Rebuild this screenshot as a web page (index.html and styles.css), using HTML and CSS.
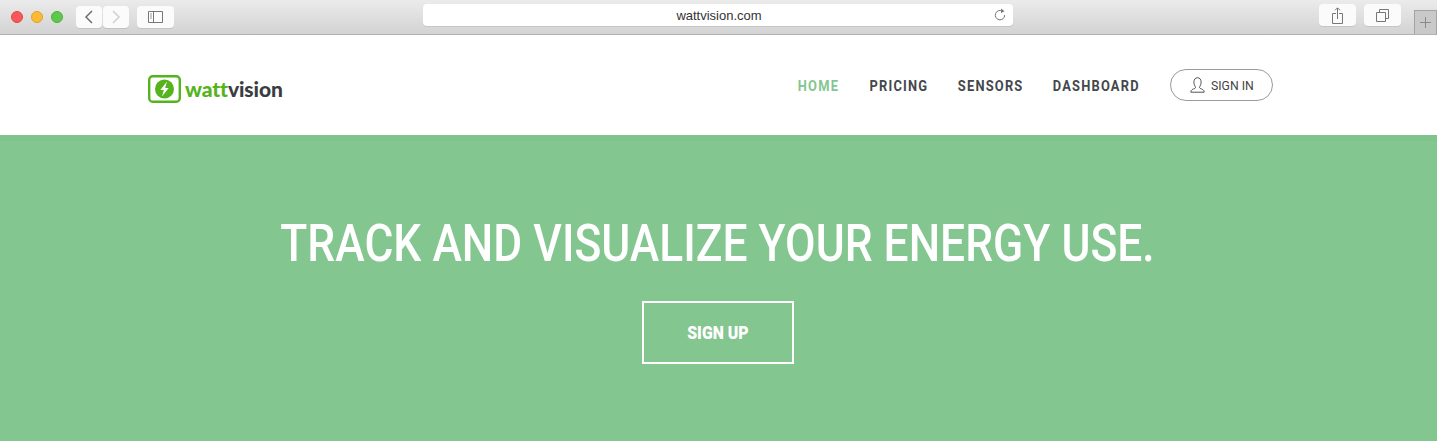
FILE: index.html
```html
<!DOCTYPE html>
<html lang="en">
<head>
  <meta charset="UTF-8">
  <meta name="viewport" content="width=device-width, initial-scale=1.0">
  <title>wattvision</title>
  <link rel="stylesheet" href="styles.css">
</head>
<body>

  <div class="toolbar">
    <div class="toolbarLeft">
      <span class="light lightRed"></span>
      <span class="light lightYellow"></span>
      <span class="light lightGreen"></span>
      <div class="navBtns">
        <span class="toolBtn backBtn">
          <svg width="10" height="16" viewBox="0 0 10 16"><path d="M8 2 2 8l6 6" fill="none" stroke="#6e6e6e" stroke-width="1.500"/></svg>
        </span>
        <span class="toolBtn backBtn">
          <svg width="10" height="16" viewBox="0 0 10 16"><path d="M2 2l6 6-6 6" fill="none" stroke="#d0d0d0" stroke-width="1.500"/></svg>
        </span>
      </div>
      <span class="toolBtn sidebarBtn">
        <svg width="16" height="12" viewBox="0 0 16 12"><path d="M.5.5h14v11H.5zM5.500.5v11" fill="none" stroke="#777"/><path d="M2 3h2M2 5h2M2 7h2" stroke="#999"/></svg>
      </span>
    </div>
    <div class="addressBar">
      <span class="addressText">wattvision.com</span>
      <svg class="reloadIcon" width="12" height="13" viewBox="0 0 12 13"><path d="M8.600 3.200A4.700 4.700 0 1 0 10.700 7" fill="none" stroke="#777"/><path d="M7 .5l3.500 2.700L7 5z" fill="#777"/></svg>
    </div>
    <div class="toolbarRight">
      <span class="toolBtn shareBtn">
        <svg width="12" height="17" viewBox="0 0 12 17"><path d="M4 6.500H.5v10h10v-10H7M5.500 12V1M3 3.300 5.500 .8 8 3.300" fill="none" stroke="#777"/></svg>
      </span>
      <span class="toolBtn shareBtn">
        <svg width="13" height="13" viewBox="0 0 13 13"><path d="M.5 3.500h9v9h-9zM3.500 3.500v-3h9v9h-3" fill="none" stroke="#777"/></svg>
      </span>
      <span class="newTab">
        <svg width="11" height="11" viewBox="0 0 11 11"><path d="M5.500 0v11M0 5.500h11" stroke="#8a8a8a"/></svg>
      </span>
    </div>
  </div>

  <header class="siteHeader">
    <a class="logo" href="#">
      <svg width="33" height="28" viewBox="0 0 33 28">
        <rect x="1.200" y="1.200" width="30.600" height="25.600" rx="3.500" fill="none" stroke="#55b31d" stroke-width="2.400"/>
        <circle cx="16.500" cy="14" r="9.500" fill="#55b31d"/>
        <path d="M19 6.500 12.300 15h3.500l-1.800 6.500 6.700-8.500h-3.500z" fill="#fff"/>
      </svg>
      <span class="logoText"><span class="logoWatt">watt</span>vision</span>
    </a>
    <nav class="mainNav">
      <a class="navLink navHome navActive" href="#"><span class="navText">HOME</span></a>
      <a class="navLink navPricing" href="#"><span class="navText">PRICING</span></a>
      <a class="navLink navSensors" href="#"><span class="navText">SENSORS</span></a>
      <a class="navLink navDashboard" href="#"><span class="navText">DASHBOARD</span></a>
      <a class="signIn" href="#">
        <svg width="15" height="16" viewBox="0 0 15 16"><path d="M.8 15.200c0-2.700 2.300-3 4-3.800.8-.4.900-1.200.4-1.900C4.300 8.300 3.900 7 3.900 5.200 3.900 2.400 5.300.7 7.500.7s3.600 1.700 3.600 4.500c0 1.800-.4 3.100-1.300 4.300-.5.700-.4 1.500.4 1.900 1.700.8 4 1.100 4 3.800z" fill="none" stroke="#555"/></svg>
        <span class="signInText">SIGN IN</span>
      </a>
    </nav>
  </header>

  <section class="hero">
    <h1 class="heroTitle">TRACK AND VISUALIZE YOUR ENERGY USE.</h1>
    <a class="signUp" href="#"><span class="signUpText">SIGN UP</span></a>
  </section>

</body>
</html>
```

FILE: styles.css
```css
body {
  margin: 0;
  height: 441px;
  overflow: hidden;
  font-family: Roboto, "Liberation Sans", sans-serif;
  background-color: #fff;
}
a {
  text-decoration: none;
}

/* browser bar */
.toolbar {
  height: 34px;
  display: grid;
  grid-template-columns: 423px 590px 1fr;
  background: linear-gradient(#ebebeb, #d3d3d3);
  border-bottom: 1px solid #b1b1b1;
}
.toolbarLeft {
  display: flex;
  align-items: center;
  padding-left: 11px;
}
.light {
  width: 12px;
  height: 12px;
  border-radius: 50%;
  margin-right: 8px;
  box-sizing: border-box;
}
.lightRed { background-color: #f9575a; border: 1px solid #e2463f; }
.lightYellow { background-color: #fdba35; border: 1px solid #e1a12a; }
.lightGreen { background-color: #5cc84c; border: 1px solid #4fae3c; }
.toolBtn {
  display: flex;
  align-items: center;
  justify-content: center;
  height: 22px;
  background-color: #fbfbfb;
  border-radius: 4px;
  box-shadow: 0 1px 0 #c4c4c4;
}
.navBtns {
  display: flex;
  gap: 1px;
  margin-left: 5px;
}
.backBtn {
  width: 26px;
}
.sidebarBtn {
  width: 37px;
  margin-left: 8px;
}
.addressBar {
  display: flex;
  align-items: center;
  justify-content: center;
  position: relative;
  height: 22px;
  margin-top: 4px;
  background-color: #fff;
  border-radius: 4px;
  box-shadow: 0 1px 0 #c4c4c4;
}
.addressText {
  font-family: "Liberation Sans", Arial, sans-serif;
  font-size: 13px;
  color: #333;
  margin-left: 2px;
}
.reloadIcon {
  position: absolute;
  right: 7px;
  top: 4px;
}
.toolbarRight {
  display: flex;
  align-items: flex-start;
  padding-left: 306px;
}
.shareBtn {
  width: 37px;
  margin-top: 4px;
  margin-right: 8px;
}
.newTab {
  display: flex;
  align-items: center;
  justify-content: center;
  width: 23px;
  height: 24px;
  margin: 10px 0 0 5px;
  background-color: #c9c9c9;
  border: 1px solid #a4a4a4;
  border-bottom: 0;
  box-sizing: border-box;
}

/* site header */
.siteHeader {
  height: 100px;
  display: flex;
  justify-content: space-between;
  padding: 0 164px 0 148px;
}
.logo {
  display: flex;
  align-items: center;
  gap: 4px;
  margin-top: 8px;
  height: 92px;
}
.logoText {
  font-family: Lato, sans-serif;
  font-size: 21px;
  font-weight: 900;
  line-height: 28px;
  letter-spacing: -0.1px;
  color: #3a3d40;
  margin-top: -1px;
}
.logoWatt {
  color: #55b31d;
}
.mainNav {
  display: flex;
  align-items: center;
  padding-top: 2px;
  height: 98px;
}
.navLink {
  display: flex;
  justify-content: center;
  margin-right: 30px;
  font-size: 14px;
  font-weight: 700;
  letter-spacing: 1.300px;
  color: #44474c;
  white-space: nowrap;
}
.navText {
  display: inline-block;
  transform: scaleX(0.92);
}
.navHome { width: 41px; }
.navPricing { width: 59px; }
.navSensors { width: 65px; }
.navDashboard { width: 86px; margin-right: 31px; }
.navActive {
  color: #84c690;
}
.signIn {
  display: flex;
  align-items: center;
  justify-content: center;
  gap: 6px;
  width: 103px;
  height: 32px;
  margin-top: -2px;
  box-sizing: border-box;
  border: 1px solid #9a9a9a;
  border-radius: 16px;
  font-size: 13px;
  color: #444;
}
.signInText {
  display: inline-block;
  width: 43px;
  white-space: nowrap;
  transform: scaleX(0.94);
  transform-origin: left center;
}

/* hero */
.hero {
  height: 306px;
  display: flex;
  flex-direction: column;
  align-items: center;
  padding-right: 1px;
  background-color: #84c690;
  border-top: 6px solid #80c38c;
  box-sizing: border-box;
}
.heroTitle {
  margin: 70px 0 0;
  font-size: 52px;
  font-weight: 500;
  line-height: 66px;
  color: #fff;
  white-space: nowrap;
  transform: scaleX(0.853);
}
.signUp {
  display: flex;
  align-items: center;
  justify-content: center;
  width: 152px;
  height: 63px;
  margin-top: 24px;
  box-sizing: border-box;
  border: 2px solid #fff;
  color: #fff;
  font-size: 18px;
  font-weight: 900;
}
.signUpText {
  display: inline-block;
  transform: scaleX(0.88);
}
```
